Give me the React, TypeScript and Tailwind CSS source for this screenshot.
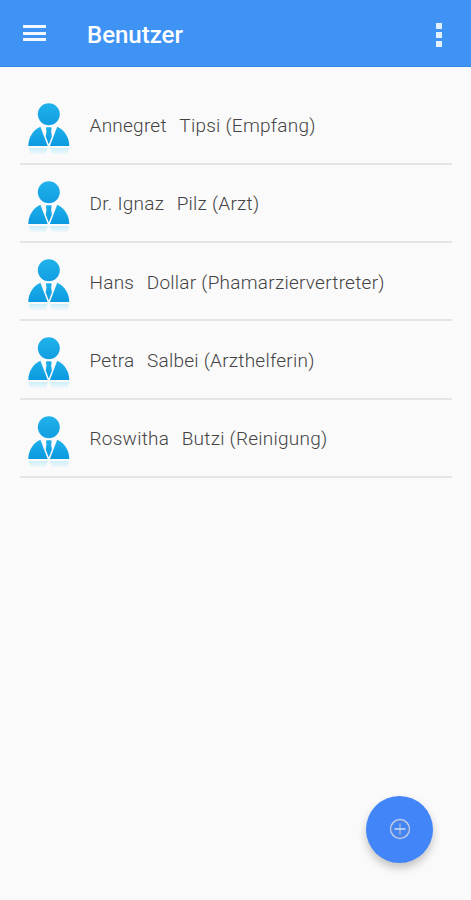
type User = {
  firstName: string
  lastName: string
  role: string
}

const users: User[] = [
  { firstName: 'Annegret', lastName: 'Tipsi',  role: 'Empfang' },
  { firstName: 'Dr. Ignaz', lastName: 'Pilz',  role: 'Arzt' },
  { firstName: 'Hans',     lastName: 'Dollar', role: 'Phamarziervertreter' },
  { firstName: 'Petra',    lastName: 'Salbei', role: 'Arzthelferin' },
  { firstName: 'Roswitha', lastName: 'Butzi',  role: 'Reinigung' },
]

function UserIcon() {
  return (
    <svg width="44" height="54" viewBox="0 0 44 54" className="mt-[6px] shrink-0" aria-hidden="true">
      <defs>
        <linearGradient id="user-fill" x1="0" y1="0" x2="0" y2="46" gradientUnits="userSpaceOnUse">
          <stop offset="0" stopColor="#22b4ec" />
          <stop offset="0.5" stopColor="#139fe2" />
          <stop offset="0.55" stopColor="#1fb0ea" />
          <stop offset="1" stopColor="#0a98df" />
        </linearGradient>
        <linearGradient id="user-mirror" x1="0" y1="0" x2="0" y2="1">
          <stop offset="0" stopColor="#cdeef8" />
          <stop offset="1" stopColor="#eef8fb" />
        </linearGradient>
      </defs>
      <circle cx="21.8" cy="13.3" r="11" fill="url(#user-fill)" />
      <path d="M13.4 25.7 L20.7 44.9 H1.3 C1.4 37 5.5 29 13.4 25.7Z" fill="url(#user-fill)" />
      <path d="M30.2 25.7 L22.9 44.9 H42.3 C42.2 37 38.1 29 30.2 25.7Z" fill="url(#user-fill)" />
      <path d="M19.3 26.2 H24.3 L24.6 28.5 L24.1 30.2 L24.9 35.5 L21.8 43.5 L18.7 35.5 L19.5 30.2 L19 28.5Z" fill="url(#user-fill)" />
      <path d="M1.4 47 H20.8 L18.7 53 H3.2Z M22.8 47 H42.2 L40.4 53 H24.9Z" fill="url(#user-mirror)" />
    </svg>
  )
}

function UserRow({ user }: { user: User }) {
  return (
    <li className="flex h-[78.2px] items-center border-b-2 border-[#e5e5e5] pl-[6.5px]">
      <UserIcon />
      <p className="ml-[19px] mt-[3px] flex gap-[12.5px] whitespace-nowrap text-[19px] font-light tracking-[0.25px] text-[#444444]">
        <span>{user.firstName}</span>
        <span>{user.lastName} ({user.role})</span>
      </p>
    </li>
  )
}

export default function App() {
  return (
    <div className="relative h-[900px] w-full overflow-hidden bg-[#fafafa] font-['Roboto',sans-serif]">
      <header className="flex h-[67px] items-center border-b border-[#3586e4] bg-[#3f93f5] pl-[23px] pr-[29px] text-white">
        <button type="button" aria-label="Menu" className="flex w-[23px] flex-col gap-[3.5px]">
          <span className="h-[3px] bg-[#f2f8ff]" />
          <span className="h-[3px] bg-[#f2f8ff]" />
          <span className="h-[3px] bg-[#f2f8ff]" />
        </button>
        <h1 className="ml-[41px] mt-[3px] text-[24px] font-medium leading-7">Benutzer</h1>
        <button type="button" aria-label="Optionen" className="ml-auto mt-[3px] flex flex-col gap-[3px]">
          <span className="size-[6px] bg-[#e3f1ff]" />
          <span className="size-[6px] bg-[#e3f1ff]" />
          <span className="size-[6px] bg-[#e3f1ff]" />
        </button>
      </header>

      <ul className="ml-5 mr-[19px] mt-[19.8px]">
        {users.map((user) => (
          <UserRow key={user.firstName} user={user} />
        ))}
      </ul>

      <button
        type="button"
        aria-label="Neu"
        className="absolute bottom-[37px] right-[38px] flex size-[67px] items-center justify-center rounded-full bg-[#4285f9] shadow-[0_5px_8px_rgba(0,0,0,0.22)]"
      >
        <svg width="22" height="22" viewBox="0 0 22 22" fill="none" className="mb-px" aria-hidden="true">
          <circle cx="11" cy="11" r="9.4" stroke="#b9cdf0" strokeWidth="1.5" />
          <circle cx="11" cy="11" r="8.2" stroke="#6488c4" strokeWidth="0.9" />
          <path d="M11 5.5V16.5" stroke="#8fa9d6" strokeWidth="1.8" />
          <path d="M5.5 11H16.5" stroke="#cfdef8" strokeWidth="1.5" />
        </svg>
      </button>
    </div>
  )
}
